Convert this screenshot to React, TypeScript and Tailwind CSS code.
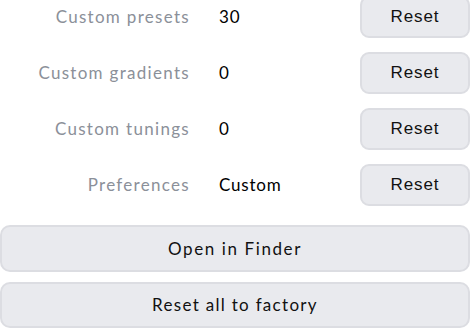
import React from "react";

const rows = [
  { label: "Custom presets", value: "30" },
  { label: "Custom gradients", value: "0" },
  { label: "Custom tunings", value: "0" },
  { label: "Preferences", value: "Custom" },
];

export default function App() {
  return (
    <div className="w-[472px] h-[329px] overflow-hidden bg-white" style={{ fontFamily: '"Lato", "Liberation Sans", sans-serif' }}>
      <div className="flex flex-col gap-[14px] mt-[-4px]">
        {rows.map((r) => (
          <div key={r.label} className="flex items-center h-[42px]">
            <div className="w-[190px] text-right text-[17px] tracking-[1.3px] text-[#8b9099]">{r.label}</div>
            <div className="ml-[29px] flex-1 text-[17px] tracking-[0.8px] text-black">{r.value}</div>
            <button className="w-[110px] h-[42px] mr-[2px] rounded-[9px] border-2 border-[#dcdde2] bg-[#e9eaee] text-[17px] tracking-[0.9px] text-[#111]" style={{ fontFamily: '"Liberation Sans", sans-serif' }}>
              Reset
            </button>
          </div>
        ))}
      </div>
      <button className="mt-[19px] w-[470px] h-[47px] flex items-center justify-center rounded-[10px] border-2 border-[#dcdde2] bg-[#e9eaee] text-[17px] tracking-[1.6px] text-[#111]">
        Open in Finder
      </button>
      <button className="mt-[10px] w-[470px] h-[46px] flex items-center justify-center rounded-[10px] border-2 border-[#dcdde2] bg-[#e9eaee] text-[17px] tracking-[1.3px] text-[#111]">
        Reset all to factory
      </button>
    </div>
  );
}
